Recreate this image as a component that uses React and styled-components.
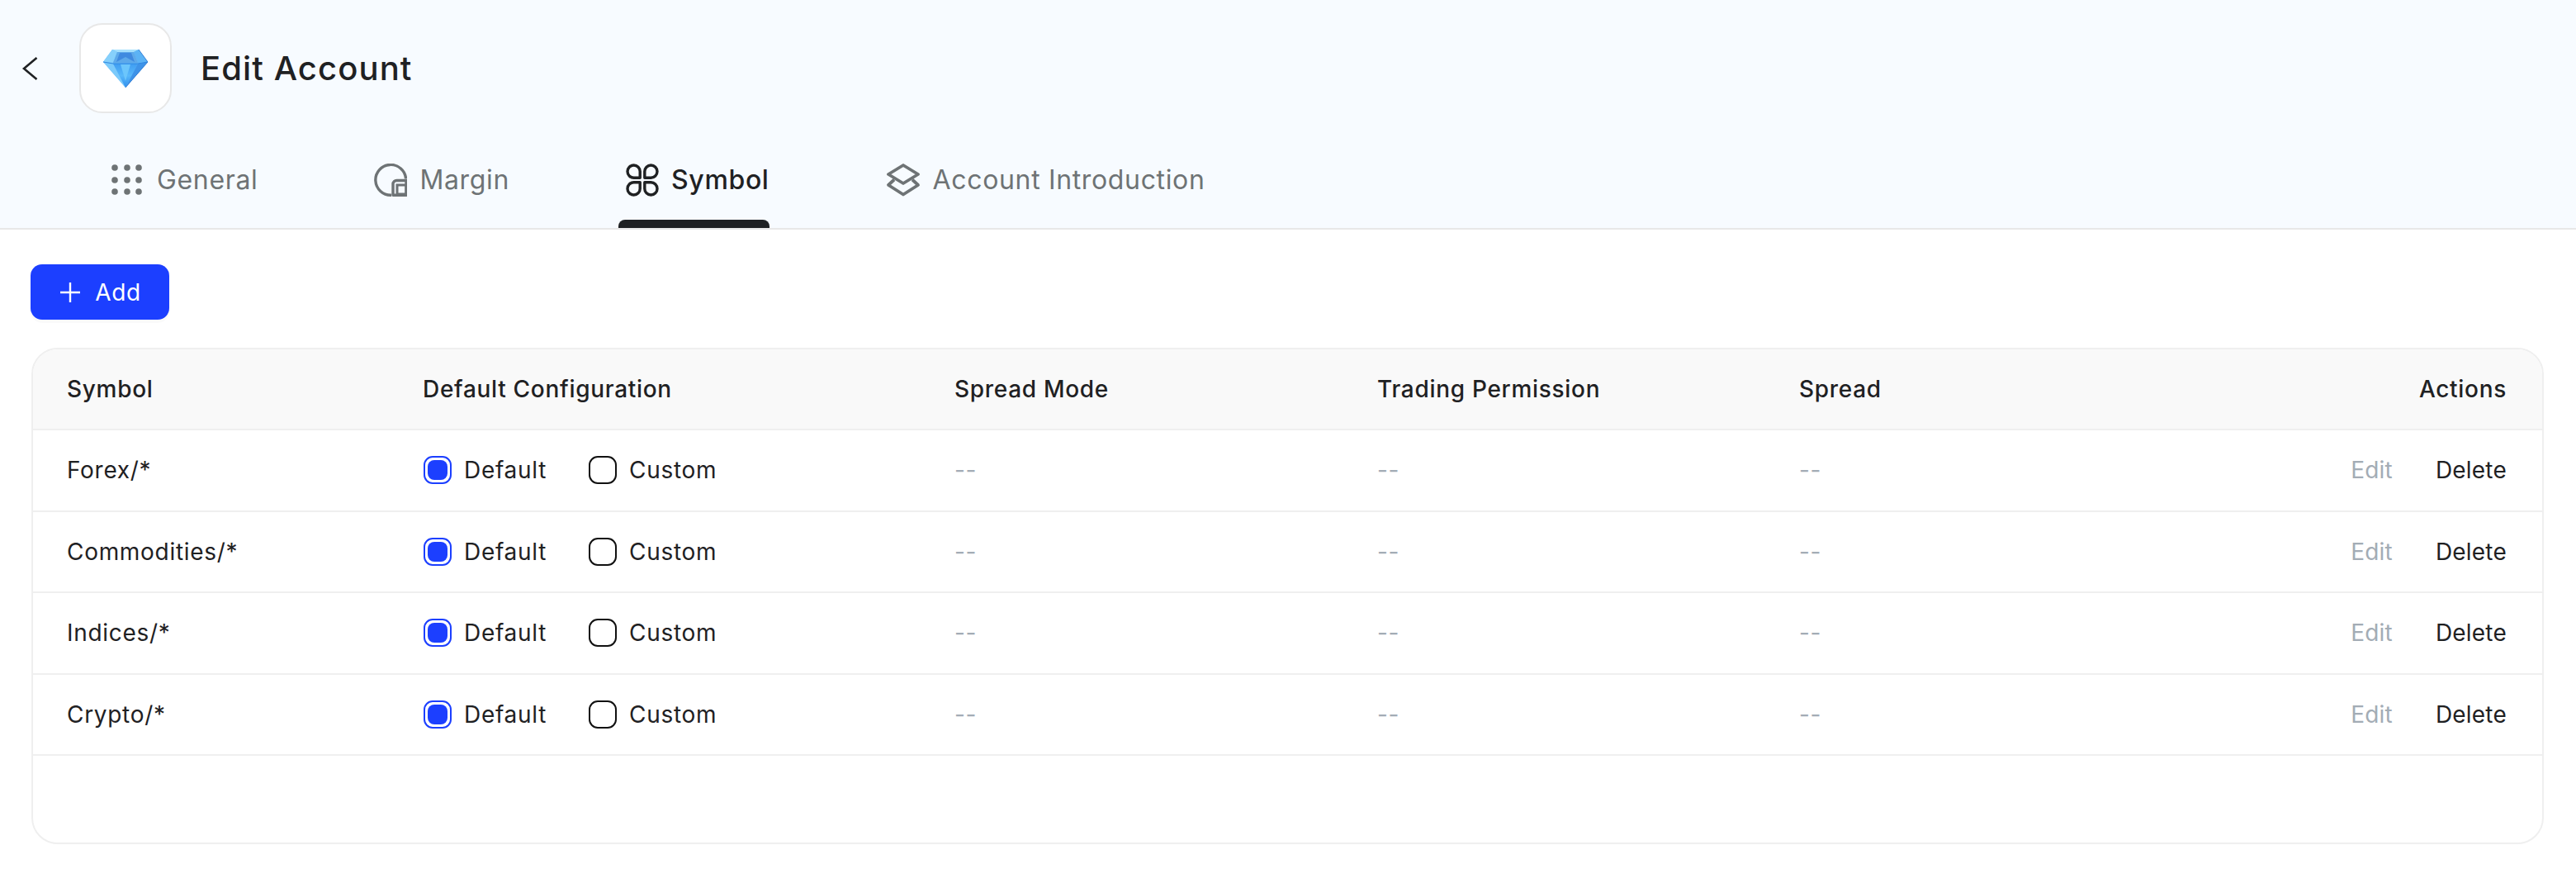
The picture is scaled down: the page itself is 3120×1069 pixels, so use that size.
import React from 'react'
import styled, { createGlobalStyle } from 'styled-components'

const GlobalStyle = createGlobalStyle`
  html, body {
    margin: 0;
    padding: 0;
    background: #fff;
    font-family: Inter, 'Noto Sans', 'Liberation Sans', sans-serif;
    color: #1f2123;
  }
  * { box-sizing: border-box; }
`

const Header = styled.header`
  height: 278px;
  background: #f7fbff;
  border-bottom: 2px solid #e8e8e8;
  padding-top: 28px;
`
const TitleRow = styled.div`
  display: flex;
  align-items: center;
  height: 109px;
  padding-left: 26px;
`
const BackButton = styled.button`
  display: flex;
  padding: 0;
  border: 0;
  background: none;
  margin-right: 50px;
`
const Logo = styled.div`
  width: 112px;
  height: 109px;
  display: flex;
  align-items: center;
  justify-content: center;
  background: #fff;
  border: 2px solid #e8e8e8;
  border-radius: 28px;
  margin-right: 35px;
`
const Title = styled.h1`
  margin: 0;
  font-size: 40px;
  line-height: 48px;
  font-weight: 500;
  letter-spacing: 1.1px;
`
const Tabs = styled.nav`
  display: flex;
  gap: 132px;
  margin-top: 61px;
  padding-left: 126px;
`
const Tab = styled.div`
  position: relative;
  display: flex;
  gap: 15px;
  height: 78px;
  padding-left: 9px;
  font-size: 32px;
  line-height: 40px;
  letter-spacing: 0.65px;
  font-weight: ${(p) => (p.$active ? 500 : 400)};
  color: ${(p) => (p.$active ? '#1f2123' : '#6e7375')};

  &::after {
    content: '';
    display: ${(p) => (p.$active ? 'block' : 'none')};
    position: absolute;
    left: 0;
    right: 0;
    bottom: 0;
    height: 10px;
    background: #1f2123;
    border-radius: 8px 8px 0 0;
  }
`
const Content = styled.main`
  padding: 42px 39px 0 37px;
`
const AddButton = styled.button`
  display: flex;
  align-items: center;
  justify-content: center;
  gap: 18px;
  width: 168px;
  height: 67px;
  padding: 0 0 0 2px;
  border: 0;
  border-radius: 14px;
  background: #1c3fff;
  box-shadow: 0 4px 0 rgba(0, 0, 0, 0.02);
  color: #fff;
  font: 400 28px Inter, sans-serif;
  letter-spacing: 0.7px;
`
const Table = styled.section`
  margin-top: 34px;
  margin-left: 1px;
  height: 601px;
  border: 2px solid #efefef;
  border-radius: 32px;
  overflow: hidden;
  font-size: 28px;
  letter-spacing: 0.7px;
`
const Row = styled.div`
  display: grid;
  grid-template-columns: 431px 644px 512px 511px 1fr auto;
  align-items: center;
  height: ${(p) => (p.$head ? '98px' : '98.5px')};
  padding: 0 43px 0 41px;
  border-bottom: 2px solid #efefef;
  background: ${(p) => (p.$head ? '#f9f9f9' : '#fff')};
  font-weight: ${(p) => (p.$head ? 500 : 400)};
`
const Empty = styled.span`
  color: #a3acb5;
`
const Options = styled.div`
  display: flex;
  gap: 51px;
  padding-left: 1px;
`
const Option = styled.label`
  display: flex;
  align-items: center;
  gap: 15px;
`
const Radio = styled.span`
  display: flex;
  align-items: center;
  justify-content: center;
  width: 34px;
  height: 34px;
  border: 2px solid ${(p) => (p.$checked ? '#1c3fff' : '#111')};
  border-radius: 11px;

  &::before {
    content: '';
    display: ${(p) => (p.$checked ? 'block' : 'none')};
    width: 24px;
    height: 24px;
    border-radius: 8px;
    background: #1c3fff;
  }
`
const Actions = styled.div`
  display: flex;
  justify-content: flex-end;
  gap: 52px;
  letter-spacing: 0.2px;
`
const EditLink = styled.span`
  color: #a3acb5;
`

const Diamond = () => (
  <svg width="54" height="46" viewBox="0 0 54 46">
    <defs>
      <linearGradient id="lower" x1="0" y1="0" x2="0" y2="1">
        <stop offset="0" stopColor="#3f9df2" />
        <stop offset="0.5" stopColor="#58b8fa" />
        <stop offset="1" stopColor="#2f8fee" />
      </linearGradient>
    </defs>
    <polygon points="11,0 43,0 54,15 27,46 0,15" fill="#6cbdf8" />
    <polygon points="11,0 43,0 37,3 17,3" fill="#a6e0fd" />
    <polygon points="11,0 17,3 12,16 0,15" fill="#86d0fb" />
    <polygon points="43,0 54,15 42,16 37,3" fill="#5cb3f5" />
    <polygon points="17,3 37,3 42,16 12,16" fill="#5da9ea" />
    <polygon points="20,4 34,4 38,15 27,9 16,15" fill="#3f8ae0" />
    <polygon points="0,15 12,17 27,46" fill="#7bcafb" />
    <polygon points="12,17 42,17 27,46" fill="url(#lower)" />
    <polygon points="54,15 42,17 27,46" fill="#3e93e8" />
    <polygon points="21,18 33,18 27,38" fill="#6cc6fc" />
    <polyline points="0,15 12,17 42,17 54,15" fill="none" stroke="#2f86e0" strokeWidth="1" />
    <polyline points="43,0 54,15 27,46" fill="none" stroke="#2a73cf" strokeWidth="0.8" />
  </svg>
)

const DotsIcon = () => (
  <svg width="40" height="40" viewBox="0 0 40 40" fill="currentColor">
    {[5, 20, 34].flatMap((y) =>
      [5, 20, 34].map((x) => <circle key={`${x}-${y}`} cx={x - 1} cy={y} r="3.8" />)
    )}
  </svg>
)
const MarginIcon = () => (
  <svg width="40" height="40" viewBox="0 0 40 40" fill="none" stroke="currentColor" strokeWidth="3.4">
    <path d="M21 38.2A18.4 18.4 0 1 1 38.6 18.5" />
    <path d="M39 20.5H27.5a4.5 4.5 0 0 0-4.5 4.5V38.3H39Z" strokeLinejoin="round" />
    <rect x="28" y="26" width="11" height="11" strokeWidth="3" />
  </svg>
)
const CloverIcon = () => (
  <svg width="40" height="40" viewBox="0 0 40 40" fill="none" stroke="currentColor" strokeWidth="3.4" strokeLinejoin="round">
    <path d="M17.2 17.2H9.6A7.6 7.6 0 1 1 17.2 9.6Z" />
    <path d="M22.8 17.2H30.4A7.6 7.6 0 1 0 22.8 9.6Z" />
    <path d="M17.2 22.8H9.6A7.6 7.6 0 1 0 17.2 30.4Z" />
    <path d="M22.8 22.8H30.4A7.6 7.6 0 1 1 22.8 30.4Z" />
  </svg>
)
const LayersIcon = () => (
  <svg width="42" height="40" viewBox="0 0 42 40" fill="none" stroke="currentColor" strokeWidth="3.8" strokeLinejoin="round">
    <path d="M21 2L39 13L21 24L3 13Z" />
    <path d="M10 19.5L3 26L21 37.5L39 26L32 19.5" />
  </svg>
)

const tabs = [
  { label: 'General', Icon: DotsIcon },
  { label: 'Margin', Icon: MarginIcon },
  { label: 'Symbol', Icon: CloverIcon, active: true },
  { label: 'Account Introduction', Icon: LayersIcon },
]

const symbols = ['Forex/*', 'Commodities/*', 'Indices/*', 'Crypto/*']

export default function App() {
  return (
    <>
      <GlobalStyle />
      <Header>
        <TitleRow>
          <BackButton>
            <svg width="20" height="30" viewBox="0 0 20 30" fill="none" stroke="#1f2123" strokeWidth="2.6">
              <path d="M18.5 2L3 15L18.5 28" />
            </svg>
          </BackButton>
          <Logo>
            <Diamond />
          </Logo>
          <Title>Edit Account</Title>
        </TitleRow>
        <Tabs>
          {tabs.map(({ label, Icon, active }) => (
            <Tab key={label} $active={active}>
              <Icon />
              {label}
            </Tab>
          ))}
        </Tabs>
      </Header>
      <Content>
        <AddButton>
          <svg width="24" height="24" viewBox="0 0 24 24" stroke="#fff" strokeWidth="2.4">
            <path d="M12 0V24M0 12H24" />
          </svg>
          Add
        </AddButton>
        <Table>
          <Row $head>
            <div>Symbol</div>
            <div>Default Configuration</div>
            <div>Spread Mode</div>
            <div>Trading Permission</div>
            <div>Spread</div>
            <div>Actions</div>
          </Row>
          {symbols.map((name) => (
            <Row key={name}>
              <div>{name}</div>
              <Options>
                <Option>
                  <Radio $checked />
                  Default
                </Option>
                <Option>
                  <Radio />
                  Custom
                </Option>
              </Options>
              <Empty>--</Empty>
              <Empty>--</Empty>
              <Empty>--</Empty>
              <Actions>
                <EditLink>Edit</EditLink>
                <span>Delete</span>
              </Actions>
            </Row>
          ))}
        </Table>
      </Content>
    </>
  )
}
